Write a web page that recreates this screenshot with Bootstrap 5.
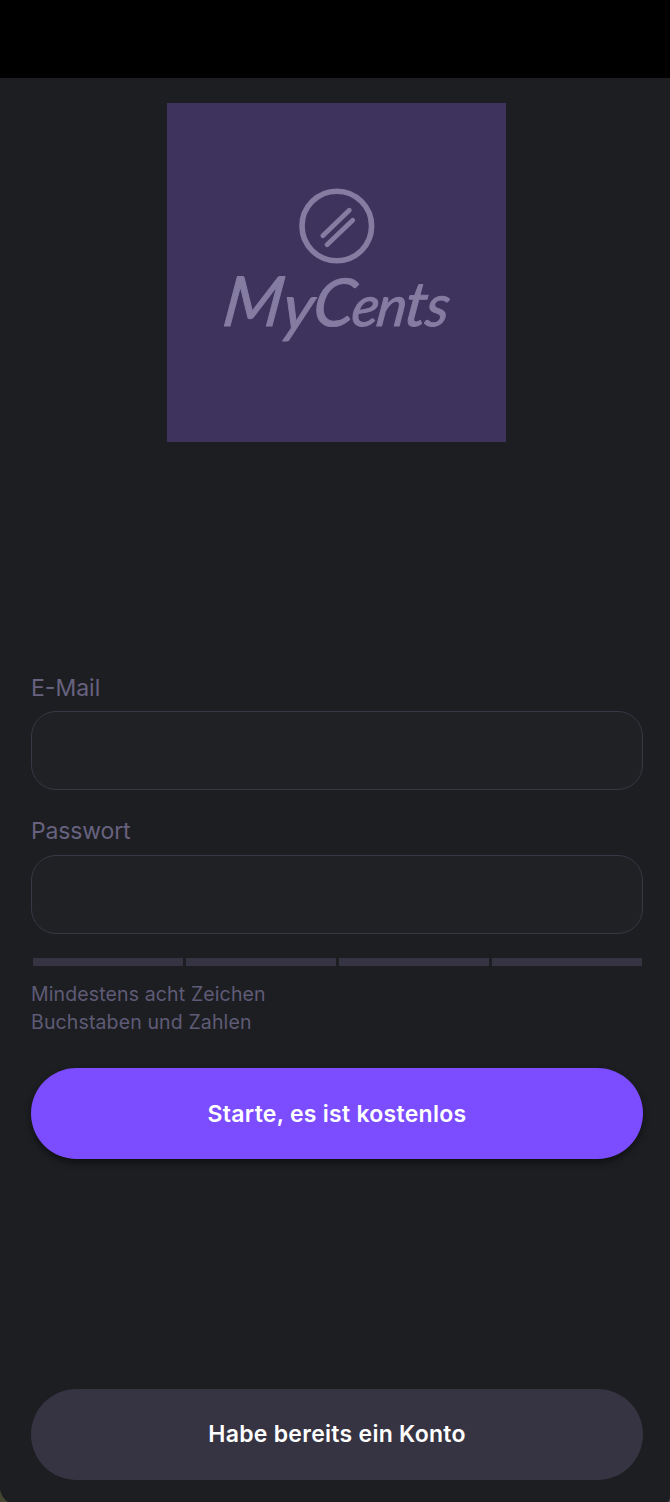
<!DOCTYPE html>
<html lang="de">
<head>
<meta charset="utf-8">
<meta name="viewport" content="width=device-width, initial-scale=1">
<title>MyCents</title>
<link href="https://cdn.jsdelivr.net/npm/bootstrap@5.3.0/dist/css/bootstrap.min.css" rel="stylesheet">
<style>
body{background:#1d1e22;font-family:Inter,"Liberation Sans",sans-serif;height:1502px;overflow:hidden}
.screen{height:1502px;position:relative}
.status-area{height:78px;background:#000}
.logo-tile{width:339px;height:339px;margin:25px 0 0 167.4px;background:#3e335d}
.signup{margin:232px 27px 0 31px}
.form-label{color:#67627f;font-size:23px;line-height:28px;margin:0 0 9px;display:block}
.form-control,.form-control:focus{height:79px;border:1.5px solid #393744;border-radius:25px;background:#202125;color:#fff;font-size:23px;box-shadow:none}
.second-field{margin:27px 0 10px;letter-spacing:-.15px}
.strength{gap:3px;margin:24px 1.5px 0}
.strength span{height:8px;background:#363442}
.hints{margin-top:14px;color:#5f5b76;font-size:19.5px;line-height:28px;letter-spacing:.13px}
.pill{height:91px;border:0;border-radius:46px;font-size:23px;font-weight:600;letter-spacing:.28px;color:#fff;padding:0}
.pill-start,.pill-start:hover{background:#7c4dff;color:#fff;margin-top:32px;padding-top:2px;box-shadow:0 4px 7px rgba(0,0,0,.45)}
.pill-login,.pill-login:hover{background:#363442;color:#fff}
.login-row{margin:0 27px 22px 31px}
.corner{position:absolute;bottom:0;width:10px;height:12px}
</style>
</head>
<body>
<main class="screen d-flex flex-column">
  <div class="status-area flex-shrink-0"></div>
  <div class="logo-tile flex-shrink-0">
    <svg class="d-block" width="339" height="339" viewBox="167 103 339 339" role="img" aria-label="MyCents">
      <g fill="none" stroke="#857ca2" stroke-linecap="round">
        <circle cx="336.8" cy="226" r="34.8" stroke-width="5.6"/>
        <path d="M322.8 235.7 349.3 210.2M327 244.7 352.7 220.2" stroke-width="4.8"/>
      </g>
      <text transform="translate(0 326) skewX(-8)" x="221 281 311 350 375 403 424" y="0" font-family="Lato, sans-serif" font-style="italic" font-weight="400" font-size="66" fill="#857ca2" stroke="#857ca2" stroke-width="1" stroke-linejoin="round"><tspan font-size="69">M</tspan><tspan font-size="64" dy="4">y</tspan><tspan font-size="66" dy="-4">C</tspan><tspan font-size="56">e</tspan><tspan font-size="56">n</tspan><tspan font-size="62">t</tspan><tspan font-size="58">s</tspan></text>
    </svg>
  </div>
  <form class="signup">
    <label class="form-label" for="mail">E-Mail</label>
    <input class="form-control" id="mail" type="email">
    <label class="form-label second-field" for="pw">Passwort</label>
    <input class="form-control" id="pw" type="password">
    <div class="strength d-flex">
      <span class="flex-fill"></span><span class="flex-fill"></span><span class="flex-fill"></span><span class="flex-fill"></span>
    </div>
    <div class="hints"><div>Mindestens acht Zeichen</div><div>Buchstaben und Zahlen</div></div>
    <button class="btn pill pill-start w-100" type="button">Starte, es ist kostenlos</button>
  </form>
  <div class="login-row mt-auto">
    <button class="btn pill pill-login w-100" type="button">Habe bereits ein Konto</button>
  </div>
  <svg class="corner start-0" viewBox="0 0 10 12"><path d="M0 0Q2 8 8 12H0Z" fill="#45462f"/></svg>
  <svg class="corner end-0" viewBox="0 0 10 12"><path d="M10 8Q9 11 7 12H10Z" fill="#45464a"/></svg>
</main>
<script src="https://cdn.jsdelivr.net/npm/bootstrap@5.3.0/dist/js/bootstrap.bundle.min.js"></script>
</body>
</html>
